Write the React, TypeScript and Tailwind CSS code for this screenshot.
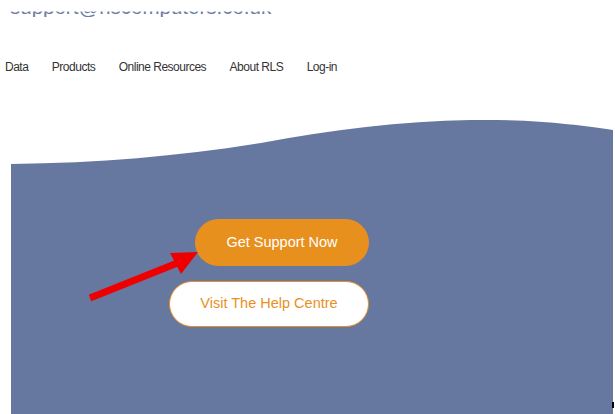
export default function App() {
  const navItems = ["Data", "Products", "Online Resources", "About RLS", "Log-in"];

  return (
    <div className="relative w-full h-[414px] overflow-hidden bg-white font-['Liberation_Sans',Arial,sans-serif]">
      {/* clipped contact line at the very top */}
      <div className="h-[17px] overflow-hidden pl-[10px]">
        <p className="-mt-[3px] text-[20.5px] leading-[20px] text-[#6a7ba5] whitespace-nowrap [clip-path:inset(14.5px_0_0_0)]">
          support@rlscomputers.co.uk
        </p>
      </div>

      {/* Navigation */}
      <nav className="mt-[42px] flex gap-[23.5px] pl-[5px] text-[12px] leading-[16px] tracking-[-0.5px] text-[#333333]">
        {navItems.map((item) => (
          <a key={item} href="#" className="whitespace-nowrap">
            {item}
          </a>
        ))}
      </nav>

      {/* Hero band */}
      <section className="mt-[43px] ml-[11px] w-[602px]">
        <svg viewBox="0 0 602 47" preserveAspectRatio="none" className="block w-full h-[47px]">
          <path
            d="M0 47 L0 46 C90 45 170 38 250 25 C320 12 390 3 460 2 C520 1 570 7 602 12 L602 47 Z"
            fill="#6677a0"
          />
        </svg>
        <div className="h-[260px] bg-[#6677a0] pt-[54px] pl-[158px]">
          <div className="w-[200px] flex flex-col items-end gap-[15px]">
            <button className="w-[174px] h-[47px] rounded-full bg-[#e8901e] text-white text-[14.5px]">
              Get Support Now
            </button>
            <button className="w-[200px] h-[46px] rounded-full bg-white border-[1.5px] border-[#e8901e] text-[#e8901e] text-[14.5px]">
              Visit The Help Centre
            </button>
          </div>
        </div>
      </section>

      {/* Red annotation arrow */}
      <svg className="absolute left-0 top-0 w-[615px] h-[414px] pointer-events-none" viewBox="0 0 615 414">
        <line x1="90" y1="298" x2="180" y2="262" stroke="#ee0000" strokeWidth="7" />
        <polygon points="198,252 170,253 181,274" fill="#ee0000" />
      </svg>

      <div className="absolute left-[612px] top-[402px] w-[2px] h-[6px] bg-black" />
    </div>
  );
}
